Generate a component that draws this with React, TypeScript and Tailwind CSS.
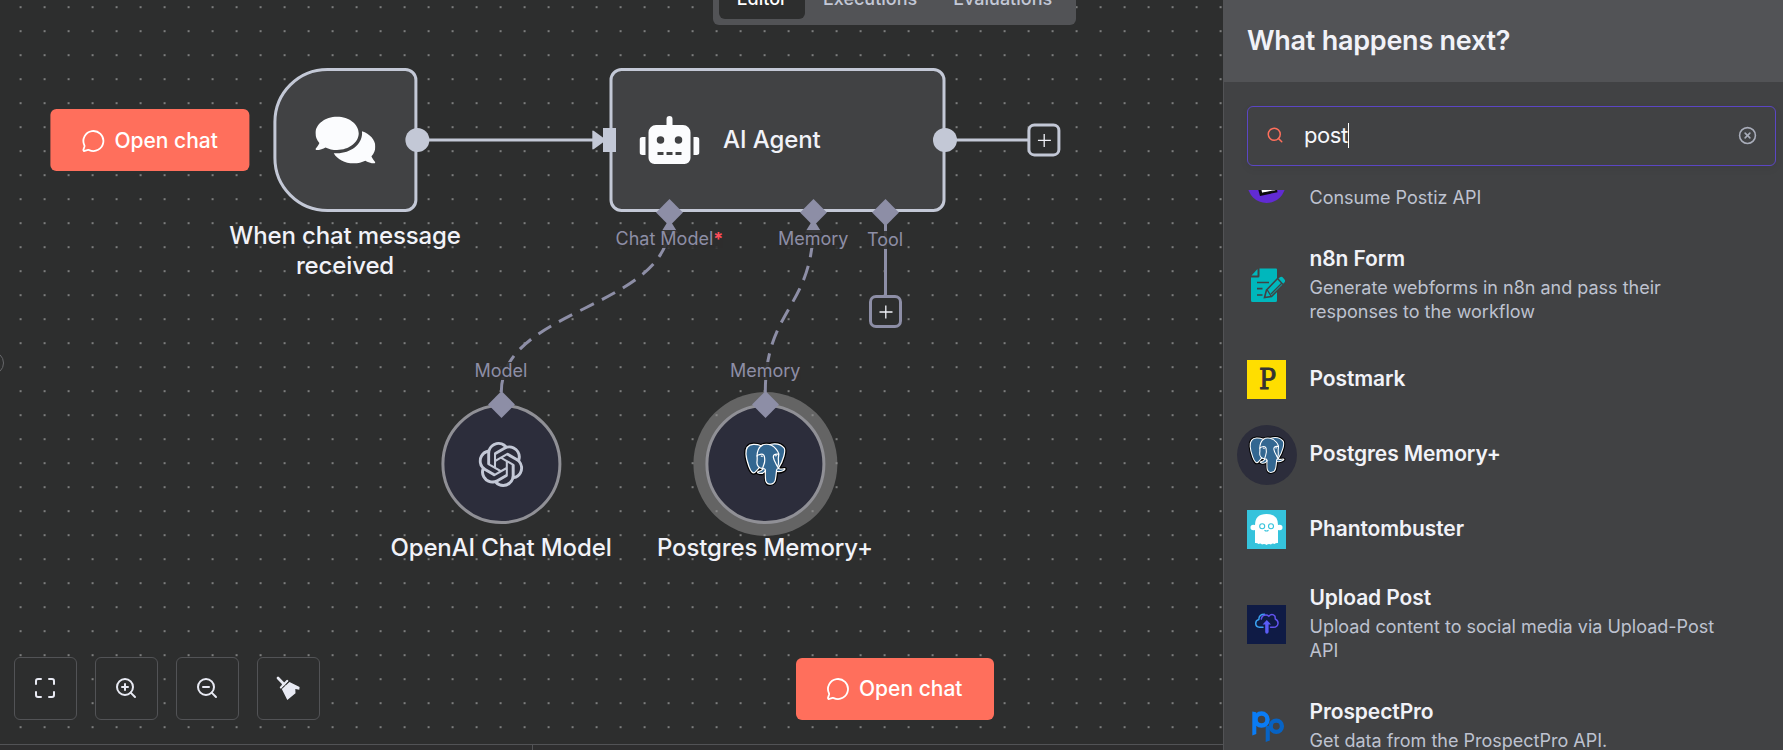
import type { ReactNode } from "react";
import { Maximize, MessageCircle, Search, ZoomIn, ZoomOut, CircleX } from "lucide-react";
import { FaComments, FaRobot } from "react-icons/fa";
import { SiOpenai } from "react-icons/si";

function PostgresLogo({ className }: { className: string }) {
  return (
    <svg viewBox="0 0 432.071 445.383" className={className} fill="none" stroke="#fff" strokeWidth="12.4651" strokeLinecap="round" strokeLinejoin="round">
      <path fill="#000" stroke="#000" strokeWidth="37.3953" strokeLinecap="butt" strokeLinejoin="miter" d="M323.205,324.227c2.833-23.601,1.984-27.062,19.563-23.239l4.463,0.392c13.517,0.615,31.199-2.174,41.587-7c22.362-10.376,35.622-27.7,13.572-23.148c-50.297,10.376-53.755-6.655-53.755-6.655c53.111-78.803,75.313-178.836,56.149-203.322C352.514-5.534,262.036,26.049,260.522,26.869l-0.482,0.089c-9.938-2.062-21.06-3.294-33.554-3.496c-22.761-0.374-40.032,5.967-53.133,15.904c0,0-161.408-66.498-153.899,83.628c1.597,31.936,45.777,241.655,98.47,178.31c19.259-23.163,37.871-42.748,37.871-42.748c9.242,6.14,20.307,9.272,31.912,8.147l0.897-0.765c-0.281,2.876-0.157,5.689,0.359,9.019c-13.572,15.167-9.584,17.83-36.723,23.416c-27.457,5.659-11.326,15.734-0.797,18.367c12.768,3.193,42.305,7.716,62.268-20.224l-0.795,3.188c5.325,4.26,4.965,30.619,5.72,49.452c0.756,18.834,2.017,36.409,5.856,46.771c3.839,10.36,8.369,37.05,44.036,29.406c29.809-6.388,52.6-15.582,54.677-101.107" />
      <path fill="#336791" stroke="none" d="M402.395,271.23c-50.302,10.376-53.76-6.655-53.76-6.655c53.111-78.808,75.313-178.843,56.153-203.326c-52.27-66.785-142.752-35.2-144.262-34.38l-0.486,0.087c-9.938-2.063-21.06-3.292-33.56-3.496c-22.761-0.373-40.026,5.967-53.127,15.902c0,0-161.411-66.495-153.904,83.63c1.597,31.938,45.776,241.657,98.471,178.312c19.26-23.163,37.869-42.748,37.869-42.748c9.243,6.14,20.308,9.272,31.908,8.147l0.901-0.765c-0.28,2.876-0.152,5.689,0.361,9.019c-13.575,15.167-9.586,17.83-36.723,23.416c-27.459,5.659-11.328,15.734-0.796,18.367c12.768,3.193,42.307,7.716,62.266-20.224l-0.796,3.188c5.319,4.26,9.054,27.711,8.428,48.969c-0.626,21.259-1.044,35.854,3.147,47.254c4.191,11.4,8.368,37.05,44.042,29.406c29.809-6.388,45.256-22.942,47.405-50.555c1.525-19.631,4.976-16.729,5.194-34.28l2.768-8.309c3.192-26.611,0.507-35.196,18.872-31.203l4.463,0.392c13.517,0.615,31.208-2.174,41.591-7c22.358-10.376,35.618-27.7,13.573-23.148z" />
      <path d="M215.866,286.484c-1.385,49.516,0.348,99.377,5.193,111.495c4.848,12.118,15.223,35.688,50.9,28.045c29.806-6.39,40.651-18.756,45.357-46.051c3.466-20.082,10.148-75.854,11.005-87.281" />
      <path d="M173.104,38.256c0,0-161.521-66.016-154.012,84.109c1.597,31.938,45.779,241.664,98.473,178.316c19.256-23.166,36.671-41.335,36.671-41.335" />
      <path d="M260.349,26.207c-5.591,1.753,89.848-34.889,144.087,34.417c19.159,24.484-3.043,124.519-56.153,203.329" />
      <path strokeLinejoin="bevel" d="M348.282,263.953c0,0,3.461,17.036,53.764,6.653c22.04-4.552,8.776,12.774-13.577,23.155c-18.345,8.514-59.474,10.696-60.146-1.069c-1.729-30.355,21.647-21.133,19.96-28.739c-1.525-6.85-11.979-13.573-18.894-30.338c-6.037-14.633-82.796-126.849,21.287-110.183c3.813-0.789-27.146-99.002-124.553-100.599c-97.385-1.597-94.19,119.762-94.19,119.762" />
      <path d="M188.604,274.334c-13.577,15.166-9.584,17.829-36.723,23.417c-27.459,5.66-11.326,15.733-0.797,18.365c12.768,3.195,42.307,7.718,62.266-20.229c6.078-8.509-0.036-22.086-8.385-25.547c-4.034-1.671-9.428-3.765-16.361,3.994z" />
      <path d="M187.715,274.069c-1.368-8.917,2.93-19.528,7.536-31.942c6.922-18.626,22.893-37.255,10.117-96.339c-9.523-44.029-73.396-9.163-73.436-3.193c-0.039,5.968,2.889,30.26-1.067,58.548c-5.162,36.913,23.488,68.132,56.479,64.938" />
      <path fill="#fff" strokeWidth="4.155" d="M172.517,141.7c-0.288,2.039,3.733,7.48,8.976,8.207c5.234,0.73,9.714-3.522,9.998-5.559c0.284-2.039-3.732-4.285-8.977-5.015c-5.237-0.731-9.719,0.333-9.996,2.367z" />
      <path fill="#fff" strokeWidth="2.0775" d="M331.941,137.543c0.284,2.039-3.732,7.48-8.976,8.207c-5.238,0.73-9.718-3.522-10.005-5.559c-0.277-2.039,3.74-4.285,8.979-5.015c5.239-0.73,9.718,0.333,10.002,2.368z" />
      <path d="M350.676,123.432c0.863,15.994-3.445,26.888-3.988,43.914c-0.804,24.748,11.799,53.074-7.191,81.435" />
    </svg>
  );
}

function PostizIcon() {
  return (
    <svg viewBox="0 0 39 39" className="size-[39px]">
      <circle cx="19.5" cy="20" r="19" fill="#612bd3" />
      <path d="M7 10 L26 6 L30.500 28.200 L13 32 Z" fill="#0c0c0c" />
      <path d="M11 9 L25 6 L29 26.500 L14.500 29.300 Z" fill="#fff" stroke="#0c0c0c" strokeWidth="1.200" />
    </svg>
  );
}

function FormIcon() {
  return (
    <svg viewBox="0 0 39 39" className="size-[39px]">
      <path d="M12.500 2.500 H29 Q30 2.500 30 3.500 V34.500 Q30 36 28.500 36 H5.500 Q4 36 4 34.500 V11.500 H11 Q12.500 11.500 12.500 10 Z" fill="#00b7bc" />
      <path d="M10.500 3 V9.500 H4.500 Z" fill="#00b7bc" />
      <path d="M10 16.500 H22 M10 22.700 H15.500 M10 29 H15.500" stroke="#414244" strokeWidth="1.700" />
      <path d="M19.500 24 L32.500 10.500 Q34.500 9 36.500 11 L38.500 13.500 Q39.500 15.500 38 17 L24.500 30.500 L17.500 31.500 Z" fill="#00b7bc" stroke="#414244" strokeWidth="1.600" />
      <path d="M31 13 L36 18.500 M20 23.500 L24 30 M34.500 17.500 L24 28" stroke="#414244" strokeWidth="1.400" />
    </svg>
  );
}

function PostmarkIcon() {
  return (
    <span className="flex size-[39px] items-center justify-center bg-[#ffde00] pl-px font-['DejaVu_Serif',serif] text-[28px] leading-none text-[#333] [-webkit-text-stroke:1px_#333]">
      <span className="scale-x-90">P</span>
    </span>
  );
}

function PhantomIcon() {
  return (
    <svg viewBox="0 0 39 39" className="size-[39px]">
      <path d="M0 0H39V39H0Z" fill="#35c3dc" />
      <path d="M8 15 Q8 4 19.500 4 Q31 4 31 15 V33 Q29 32.500 27.500 34 Q25.500 33 24 34.500 Q21.500 33.500 19.500 35 Q17.500 33.500 15 34.500 Q13.500 33 11.500 34 Q10 32.500 8 33 Z" fill="#fff" />
      <path d="M8 15 Q3.500 14 3.500 17.500 Q3.500 21 8 20 M31 15 Q35.500 14 35.500 17.500 Q35.500 21 31 20" fill="#fff" />
      <g fill="none" stroke="#35c3dc" strokeWidth="1.100">
        <circle cx="15.200" cy="16.200" r="2.500" />
        <circle cx="24" cy="16.200" r="2.500" />
        <path d="M17.500 20.200 Q19.500 21.800 21.500 20.200" />
      </g>
    </svg>
  );
}

function UploadPostIcon() {
  return (
    <svg viewBox="0 0 39 39" className="size-[39px]">
      <path d="M0 0H39V39H0Z" fill="#0f1b45" />
      <g fill="none" strokeWidth="1.500" strokeLinecap="round">
        <path d="M16 22.300 H12.500 Q8.700 22 8.700 18.300 Q8.800 15.300 11.800 14.500 Q12 9.300 17.500 9.300" stroke="#3aa0f0" />
        <path d="M14.300 14 Q15 10 19 10 Q20.500 10 21.800 11.200 Q25 7.800 28 11.200 L28.300 14 Q31.300 15.500 31 18.500 Q30.500 22.300 26.500 22.300 H23.500" stroke="#6153ee" />
      </g>
      <path d="M19.800 15 L24 19.500 H21.600 V27 Q21.400 28.800 19.800 28.800 Q18.300 28.800 18.200 27 V19.500 H15.600 Z" fill="#5a5cf5" />
    </svg>
  );
}

function ProspectProIcon() {
  return (
    <svg viewBox="0 0 39 39" className="size-[39px]" fill="none">
      <circle cx="29.300" cy="19.300" r="5.600" stroke="#0763c4" strokeWidth="4.300" />
      <path d="M18.700 19 H22.800 V33.500 L18.700 35 Z" fill="#0763c4" />
      <circle cx="14.500" cy="12.600" r="6" stroke="#0a7cf5" strokeWidth="4.500" />
      <path d="M5.300 4.500 L9.300 5.200 V27 L5.300 28.500 Z" fill="#0a7cf5" />
    </svg>
  );
}

function TidyIcon() {
  return (
    <svg viewBox="0 0 24 24" className="size-6" fill="#e8eaf3">
      <path d="M2 2 L8.500 8.700" stroke="#e8eaf3" strokeWidth="2.700" strokeLinecap="round" />
      <path d="M11.200 5 L5 11.500 M7 8.500 L9.500 7" stroke="#e8eaf3" strokeWidth="2.400" strokeLinecap="round" />
      <path d="M13.500 6 L23.600 11 L23.300 13.800 L19.300 13 L19.500 17.200 L11.300 24 L5.800 12.900 Z" />
      <path d="M12.800 5.300 L5.600 12.600" stroke="#2d2e2e" strokeWidth="0.800" />
    </svg>
  );
}

function OpenChat({ className }: { className: string }) {
  return (
    <button className={`absolute flex h-[62px] items-center rounded-md bg-[#ff6f5c] text-[21px] font-medium text-white ${className}`}>
      <MessageCircle className="mr-[9px] size-6" strokeWidth={1.8} />
      Open chat
    </button>
  );
}

function Diamond({ className }: { className: string }) {
  return <div className={`absolute size-[19px] rotate-45 bg-[#8d8ea6] ${className}`} />;
}

function PortLabel({ className, children }: { className: string; children: ReactNode }) {
  return (
    <div className={`absolute bg-[#2d2e2e]/90 text-[18px] leading-[18px] whitespace-nowrap text-[#8d8ea6] ${className}`}>
      {children}
    </div>
  );
}

function NodeLabel({ className, children }: { className: string; children: ReactNode }) {
  return <div className={`absolute text-center text-[24px] leading-[30px] font-medium tracking-[-0.13px] text-[#f1f2f8] ${className}`}>{children}</div>;
}

function PlusButton({ className }: { className: string }) {
  return (
    <div className={`absolute flex size-[33px] items-center justify-center rounded-[7px] border-[3px] bg-[#2d2e2e] ${className}`}>
      <svg viewBox="0 0 14 14" className="size-[14px] shrink-0" stroke="#f1f2f8" strokeWidth="1.300">
        <path d="M6.800 0.500 V13.500 M0.500 7 H13.500" />
      </svg>
    </div>
  );
}

function ToolButton({ children }: { children: ReactNode }) {
  return <button className="flex size-[63px] items-center justify-center rounded-md border border-[#525356] bg-[#2d2e2e] pr-[2px] pb-[2px] text-[#e8eaf3]">{children}</button>;
}

function Canvas() {
  return (
    <div className="relative min-h-0 flex-1 overflow-hidden bg-[radial-gradient(circle_at_12px_12px,#8a8b8b_0.6px,transparent_1.3px)] bg-[length:24px_24px] bg-[position:8.6px_19.2px]">
      <svg className="absolute inset-0 h-full w-full" viewBox="0 0 1223 744" fill="none">
        <path d="M417 140 H594 M945 140 H1028" stroke="#c3c8d6" strokeWidth="3" />
        <path d="M592.300 131.500 Q592.300 130 594 131 L605 139 Q606 140 605 141 L594 149 Q592.300 150 592.300 148.500 Z" fill="#c3c8d6" />
        <path d="M501.300 392 C501.300 308 669.300 308 669.300 224" stroke="#8d8ea6" strokeWidth="3" strokeDasharray="15 9" />
        <path d="M765.300 392 C765.300 308 813.300 308 813.300 224" stroke="#8d8ea6" strokeWidth="3" strokeDasharray="15 9" />
        <path d="M885.500 224 V296" stroke="#8d8ea6" strokeWidth="3" />
        <path d="M669.300 219 L678 233 H660.600 Z M813.300 219 L822 233 H804.600 Z" fill="#8d8ea6" />
      </svg>

      <div className="absolute top-[-36px] left-[713px] flex h-[61px] w-[363px] items-end gap-[3px] rounded-md bg-[#525356] p-[6px] text-[18px] font-medium text-[#c3c8d6]">
        <span className="flex h-[42px] w-[86px] items-center justify-center rounded-md bg-[#2d2e2e] pt-px text-white">Editor</span>
        <span className="flex h-[42px] w-[124px] items-center justify-center pt-px pl-px">Executions</span>
        <span className="flex h-[42px] w-[136px] items-center justify-center pt-px pl-px">Evaluations</span>
      </div>

      <OpenChat className="top-[109px] left-[50px] w-[199px] translate-x-[0.4px] pt-px pl-[31px]" />
      <div className="absolute top-[68px] left-[273px] flex size-[144px] translate-x-[0.4px] items-center justify-center rounded-l-[54px] rounded-r-[12px] border-[3px] border-[#c3c8d6] bg-[#414244]">
        <FaComments className="size-[60px] text-[#fbfcfe]" />
      </div>
      <div className="absolute top-[128px] left-[405px] size-6 translate-x-[0.4px] rounded-full bg-[#c3c8d6]" />
      <NodeLabel className="top-[221px] left-[215px] w-[260px]">When chat message received</NodeLabel>

      <div className="absolute top-[68px] left-[609px] flex h-[144px] w-[336px] translate-x-[0.5px] items-center rounded-[12px] border-[3px] border-[#c3c8d6] bg-[#414244] pl-[27px]">
        <FaRobot className="size-[60px] text-[#fbfcfe]" />
        <span className="ml-[23.500px] text-[24px] font-medium tracking-[-0.1px] text-[#f1f2f8]">AI Agent</span>
      </div>
      <div className="absolute top-[128px] left-[603px] h-6 w-[13px] bg-[#c3c8d6]" />
      <div className="absolute top-[128px] left-[933px] size-6 rounded-full bg-[#c3c8d6]" />
      <PlusButton className="top-[123px] left-[1027px] translate-x-[0.4px] translate-y-[0.4px] border-[#c3c8d6]" />

      <Diamond className="top-[203px] left-[660px]" />
      <Diamond className="top-[203px] left-[804px]" />
      <Diamond className="top-[203px] left-[876px]" />
      <PortLabel className="top-[230px] left-[615.500px]">
        Chat Model<span className="font-bold text-[#ff4d5a]">*</span>
      </PortLabel>
      <PortLabel className="top-[230px] left-[778px]">Memory</PortLabel>
      <PortLabel className="top-[231px] left-[867px]">Tool</PortLabel>
      <PlusButton className="top-[295px] left-[869px] border-[#8d8ea6]" />

      <div className="absolute top-[404px] left-[441px] flex size-[120px] translate-x-[0.4px] items-center justify-center rounded-full border-[3px] border-[#909096] bg-[#2c2d3b] pr-px">
        <SiOpenai className="size-[45px] text-[#c3c8d6]" />
      </div>
      <div className="absolute top-[404px] left-[705px] flex size-[120px] translate-x-[0.4px] items-center justify-center rounded-full border-[3px] border-[#909096] bg-[#2c2d3b] pr-px shadow-[0_0_0_12px_rgba(145,145,145,0.55)]">
        <PostgresLogo className="size-[44px]" />
      </div>
      <PortLabel className="top-[362px] left-[474.500px]">Model</PortLabel>
      <PortLabel className="top-[362px] left-[730px]">Memory</PortLabel>
      <Diamond className="top-[395px] left-[492px]" />
      <Diamond className="top-[395px] left-[756px]" />
      <NodeLabel className="top-[533px] left-[371px] w-[260px]">OpenAI Chat Model</NodeLabel>
      <NodeLabel className="top-[533px] left-[635px] w-[260px]">Postgres Memory+</NodeLabel>

      <div className="absolute top-[351px] left-[-20px] size-6 rounded-full border border-[#66676a]" />
      <div className="absolute top-[657px] left-[14px] flex gap-[18px]">
        <ToolButton><Maximize className="size-6" strokeWidth={2} /></ToolButton>
        <ToolButton><ZoomIn className="size-6" strokeWidth={2} /></ToolButton>
        <ToolButton><ZoomOut className="size-6" strokeWidth={2} /></ToolButton>
        <ToolButton><TidyIcon /></ToolButton>
      </div>
      <OpenChat className="top-[658px] left-[796px] w-[198px] pl-[30px]" />
    </div>
  );
}

const results: { title: string; text?: string; icon: ReactNode }[] = [
  { title: "Postiz", text: "Consume Postiz API", icon: <PostizIcon /> },
  { title: "n8n Form", text: "Generate webforms in n8n and pass their responses to the workflow", icon: <FormIcon /> },
  { title: "Postmark", icon: <PostmarkIcon /> },
  {
    title: "Postgres Memory+",
    icon: (
      <span className="-m-[10.500px] flex size-[60px] shrink-0 items-center justify-center rounded-full bg-[#2c2d3b]">
        <PostgresLogo className="size-[38px]" />
      </span>
    ),
  },
  { title: "Phantombuster", icon: <PhantomIcon /> },
  { title: "Upload Post", text: "Upload content to social media via Upload-Post API", icon: <UploadPostIcon /> },
  { title: "ProspectPro", text: "Get data from the ProspectPro API.", icon: <ProspectProIcon /> },
];

function Panel() {
  return (
    <aside className="flex h-full w-[560px] shrink-0 flex-col border-l border-[#525356] bg-[#414244]">
      <header className="flex h-[82px] shrink-0 items-center bg-[#525356] pl-[23px] text-[27px] font-semibold tracking-[-0.25px] text-[#f1f2f8]">What happens next?</header>
      <div className="mt-6 ml-[23px] flex h-[60px] w-[529px] shrink-0 items-center rounded-md border border-[#5b46c4] pr-[18px] pb-[2px] pl-[18px] shadow-[0_3px_9px_rgba(0,0,0,0.05)]">
        <Search className="size-[18px] text-[#ff6f5c]" strokeWidth={2} />
        <span className="ml-[20px] text-[22px] tracking-[-0.4px] text-[#f6f7fb]">post</span>
        <span className="h-[25px] w-px bg-white" />
        <CircleX className="ml-auto size-[19px] text-[#a9adba]" strokeWidth={2} />
      </div>
      <div className="mt-6 min-h-0 flex-1 overflow-hidden">
        <div className="-mt-[52px]">
          {results.map((r) => (
            <div key={r.title} className="flex items-center py-[18px] pl-[23px]">
              <div className="flex size-[39px] shrink-0 items-center justify-center">{r.icon}</div>
              <div className="ml-[23.500px] w-[425px]">
                <div className="pb-[2px] text-[21px] leading-[25px] font-semibold tracking-[-0.1px] text-[#f1f2f8]">{r.title}</div>
                {r.text && <div className="mt-[3px] text-[18px] leading-6 text-[#bec2d0]">{r.text}</div>}
              </div>
            </div>
          ))}
        </div>
      </div>
    </aside>
  );
}

export default function App() {
  return (
    <div className="flex h-[750px] w-[1783px] overflow-hidden bg-[#2d2e2e] font-['Inter',sans-serif]">
      <main className="flex min-w-0 flex-1 flex-col">
        <Canvas />
        <div className="flex h-[6px] shrink-0 border-t border-[#525356] bg-[#2e2e2f]">
          <div className="w-[533px] border-r border-[#525356]" />
        </div>
      </main>
      <Panel />
    </div>
  );
}
